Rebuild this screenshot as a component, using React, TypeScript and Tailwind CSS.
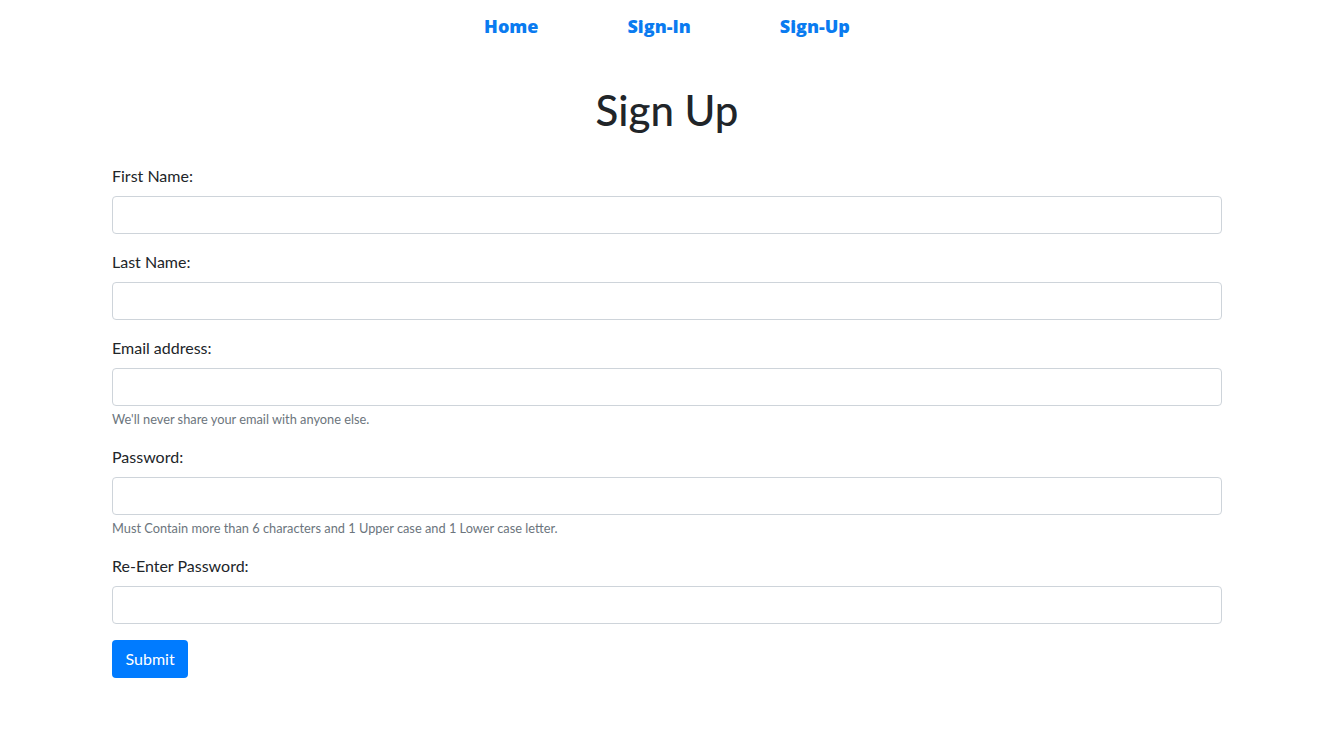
import React from 'react';

const fields = [
  { id: 'firstName', label: 'First Name:', type: 'text' },
  { id: 'lastName', label: 'Last Name:', type: 'text' },
  { id: 'email', label: 'Email address:', type: 'email', help: "We'll never share your email with anyone else." },
  {
    id: 'password',
    label: 'Password:',
    type: 'password',
    help: 'Must Contain more than 6 characters and 1 Upper case and 1 Lower case letter.',
  },
  { id: 'rePassword', label: 'Re-Enter Password:', type: 'password' },
];

const navLink = 'text-[18px] leading-[27px] font-extrabold text-[#0a7bf0] [font-family:"Open_Sans",Lato,sans-serif]';

export default function App() {
  return (
    <div className="min-h-screen bg-white pr-[9px] text-[#212529]" style={{ fontFamily: 'Lato, "Open Sans", sans-serif' }}>
      <nav className="flex justify-center gap-[89px] pt-[13px]">
        <a href="#" className={navLink}>Home</a>
        <a href="#" className={navLink}>Sign-In</a>
        <a href="#" className={navLink}>Sign-Up</a>
      </nav>

      <div className="mx-auto w-[1140px] px-[15px]">
        <h1 className="mt-[46px] mb-[30px] text-center text-[42px] leading-[48px] font-medium">Sign Up</h1>

        <form onSubmit={e => e.preventDefault()}>
          {fields.map(f => (
            <div key={f.id} className="mb-4">
              <label htmlFor={f.id} className="mb-2 block text-[16px] leading-6">
                {f.label}
              </label>
              <input
                id={f.id}
                type={f.type}
                className="block h-[38px] w-full rounded border border-[#ced4da] px-3 text-[16px] outline-none"
              />
              {f.help && (
                <small className="mt-1 block text-[12.8px] leading-[19.2px] text-[#6c757d]">{f.help}</small>
              )}
            </div>
          ))}
          <button
            type="submit"
            className="h-[38px] rounded bg-[#007bff] px-[13.5px] text-[16px] leading-6 text-white"
          >
            Submit
          </button>
        </form>
      </div>
    </div>
  );
}
